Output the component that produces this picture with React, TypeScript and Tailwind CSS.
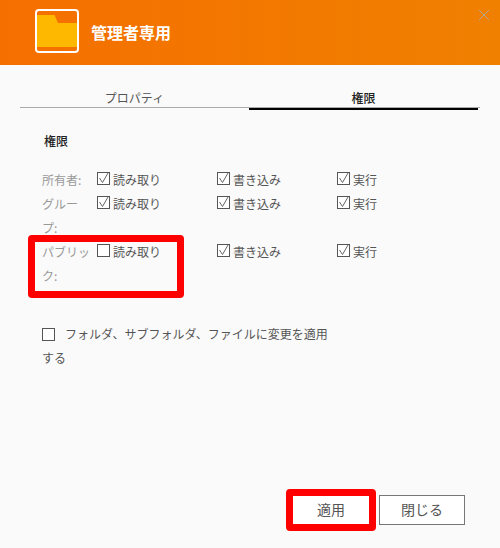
const font = { fontFamily: '"Noto Sans CJK JP", "Noto Sans", sans-serif' };

function Box({ checked }: { checked: boolean }) {
  return (
    <svg width="13" height="13" viewBox="0 0 13 13" className="shrink-0 block">
      <rect x="0.5" y="0.5" width="12" height="12" fill="#fff" stroke="#555" strokeWidth="1" />
      {checked && <path d="M2.5 6 L5.5 10.5 L11 1" fill="none" stroke="#666" strokeWidth="1" />}
    </svg>
  );
}

function Perm({ label, checked = true, wide = true }: { label: string; checked?: boolean; wide?: boolean }) {
  return (
    <div className={`flex items-start gap-[3px] ${wide ? "w-[120px]" : ""}`}>
      <div className="mt-[4px]"><Box checked={checked} /></div>
      <span className="text-[#555]">{label}</span>
    </div>
  );
}

function Row({ who, readOn = true }: { who: string; readOn?: boolean }) {
  return (
    <div className="flex items-start">
      <div className="w-[50px] mr-[5px] text-[#999] break-all">{who}</div>
      <Perm label="読み取り" checked={readOn} />
      <Perm label="書き込み" />
      <Perm label="実行" wide={false} />
    </div>
  );
}

export default function App() {
  return (
    <div className="relative w-[500px] h-[548px] overflow-hidden bg-[#fafafa] flex flex-col text-[12px] leading-[24px]" style={font}>
      <header className="h-[65px] shrink-0 flex items-center pl-[35px] bg-gradient-to-r from-[#f56f00] to-[#f08000] relative">
        <div className="w-[44px] h-[44px] border-[2px] border-white rounded-[4px] overflow-hidden mb-[3px]">
          <svg width="40" height="40" viewBox="0 0 40 40" className="block">
            <path d="M0 4 H17.5 L21 12 H40 V36 H0 Z" fill="#ffb800" />
          </svg>
        </div>
        <h1 className="ml-[12px] mb-[2px] text-white text-[16px] font-bold">管理者専用</h1>
        <svg width="12" height="12" viewBox="0 0 12 12" className="absolute right-[10px] top-[9px]">
          <path d="M1 1 L11 11 M11 1 L1 11" stroke="#b0a79a" strokeWidth="1" fill="none" />
        </svg>
      </header>

      <div className="mt-[20px] mx-[20px] flex w-[460px] border-b border-[#aaa] h-[23px]">
        <div className="w-[229px] text-center text-[#555] leading-[25px]">プロパティ</div>
        <div className="w-[229px] h-[23px] text-center text-[#222] font-medium border-b-[2px] border-black leading-[25px] box-content">権限</div>
      </div>

      <div className="mt-[21px] ml-[44px] font-medium text-[#222]">権限</div>

      <div className="mt-[15px] ml-[42px] flex flex-col">
        <Row who="所有者:" />
        <Row who="グループ:" />
        <Row who="パブリック:" readOn={false} />
      </div>

      <div className="mt-[34px] ml-[42px] w-[290px] text-[#555]">
        <span className="inline-block align-[-2px] mr-[10px]"><Box checked={false} /></span>
        フォルダ、サブフォルダ、ファイルに変更を適用する
      </div>

      <div className="mt-auto mb-[23px] mr-[35px] flex justify-end gap-[5px] text-[14px]">
        <button className="w-[86px] h-[30px] pb-[3px] bg-white text-[#555] border border-[#777]">適用</button>
        <button className="w-[86px] h-[30px] pb-[3px] bg-white text-[#555] border border-[#777]">閉じる</button>
      </div>

      <div className="absolute left-[28px] top-[235px] w-[156px] h-[63px] border-[7px] border-[#ff0000] rounded-[4px]" />
      <div className="absolute left-[286px] top-[489px] w-[90px] h-[42px] border-[7px] border-[#ff0000] rounded-[4px]" />
    </div>
  );
}
